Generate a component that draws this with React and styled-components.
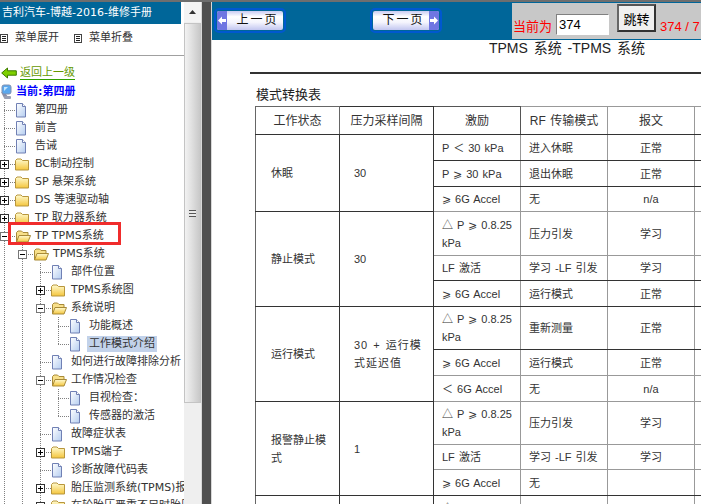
import React from 'react';
import styled, { createGlobalStyle } from 'styled-components';

const GlobalStyle = createGlobalStyle`
  html, body {
    margin: 0;
    height: 100%;
    overflow: hidden;
    background: #fff;
  }
`;

const treeFont = `"DejaVu Sans", "Noto Sans CJK SC", sans-serif`;
const docFont = `"Liberation Sans", "Noto Sans CJK SC", sans-serif`;
const blue = '#006699';
const vDots = 'repeating-linear-gradient(to bottom, #808080 0 1px, transparent 1px 2px)';
const hDots = 'repeating-linear-gradient(to right, #808080 0 1px, transparent 1px 2px)';

const Shell = styled.div`
  display: flex;
  height: 504px;
  box-sizing: border-box;
  border-top: 2px solid #6e6e6e;
  overflow: hidden;
`;

/* left side */
const Side = styled.div`
  position: relative;
  width: 184px;
  flex: none;
  overflow: hidden;
  font: 11px/18px ${treeFont};
  color: #333;
  white-space: nowrap;
`;
const SideTitle = styled.div`
  width: 179px;
  height: 22px;
  padding-left: 2px;
  background: ${blue};
  color: #fff;
  line-height: 22px;
`;
const MenuBar = styled.div`
  display: flex;
  align-items: center;
  height: 32px;
  padding-bottom: 3px;
  box-sizing: border-box;
  border-bottom: 1px solid #a0a0a0;
`;
const MenuItem = styled.span`
  display: flex;
  align-items: center;
  gap: 7px;
  margin-right: 15px;
`;
const BackRow = styled.div`
  display: flex;
  align-items: center;
  gap: 3px;
  height: 18px;
  padding: 8px 0 0 1px;
`;
const BackLink = styled.a`
  color: #669900;
  line-height: 12px;
  border-bottom: 1px solid #33a000;
`;
const CurrentRow = styled.div`
  display: flex;
  align-items: center;
  gap: 4px;
  height: 18px;
  padding-left: 1px;
  margin-top: 1px;
  color: #0000ff;
  font-weight: bold;
`;
const TreeRow = styled.div`
  display: flex;
  align-items: center;
  height: 18.03px;
`;
const Guide = styled.span`
  display: flex;
  align-items: center;
  flex: none;
  width: ${(p) => (p.$junction ? 15 : 18)}px;
  height: 100%;
  background-repeat: no-repeat;
  background-image: ${(p) =>
    p.$junction ? `${vDots}, ${hDots}` : vDots};
  background-position: ${(p) =>
    p.$junction ? '4px 0, 4px 50%' : '4px 0'};
  background-size: ${(p) => {
    const v = p.$last ? '1px 50%' : '1px 100%';
    return p.$junction ? `${v}, 11px 1px` : v;
  }};
`;
const IconSlot = styled.span`
  display: flex;
  align-items: center;
  flex: none;
  width: 18px;
`;
const Label = styled.span`
  margin-left: ${(p) => (p.$active ? 0 : 2)}px;
  padding: 0 ${(p) => (p.$active ? 2 : 0)}px;
  height: 16px;
  line-height: 16px;
  background: ${(p) => (p.$active ? '#c2d2ea' : 'transparent')};
`;
const RedMark = styled.div`
  position: absolute;
  left: 8px;
  top: 220px;
  width: 107px;
  height: 17px;
  border: 3px solid #f02c2c;
  pointer-events: none;
`;

/* scrollbar and splitter */
const Scrollbar = styled.div`
  display: flex;
  flex-direction: column;
  flex: none;
  width: 17px;
  background: #efefef;
`;
const ScrollUp = styled.div`
  display: flex;
  align-items: center;
  justify-content: center;
  height: 20px;
  background: #f4f4f4;
`;
const ScrollThumb = styled.div`
  display: flex;
  align-items: center;
  justify-content: center;
  height: 380px;
  margin-top: 1px;
  border: 1px solid #c4c4c4;
  box-sizing: border-box;
  background: linear-gradient(to right, #f2f2f2, #e2e2e2 40%, #c8c8c8);
`;
const Grip = styled.span`
  width: 7px;
  height: 7px;
  background: repeating-linear-gradient(to bottom, #555 0 1px, #e8e8e8 1px 3px);
`;
const Splitter = styled.div`
  flex: none;
  width: 9px;
  background: #505050;
  border-left: 1px solid #d8d8d8;
  border-right: 1px solid #d8d8d8;
`;

/* right side */
const Main = styled.div`
  flex: 1;
  min-width: 0;
  overflow: hidden;
`;
const TopBar = styled.div`
  display: flex;
  align-items: flex-start;
  height: 38px;
  padding-left: 2px;
  background: ${blue};
`;
const PageButton = styled.div`
  display: flex;
  flex: none;
  flex-direction: ${(p) => (p.$next ? 'row-reverse' : 'row')};
  align-items: stretch;
  width: 66px;
  height: 19px;
  margin: 9px ${(p) => (p.$next ? 0 : 87)}px 0 3px;
  border-radius: 2px;
  outline: 2px solid #0058d0;
  outline-offset: 1px;
  overflow: hidden;
  background: linear-gradient(to bottom, #c8cbf2, #ffffff 30%, #f4f4fd 60%, #c2c6f0);
  font: 12px/19px ${docFont};
  word-spacing: -1.3px;
  color: #111;
`;
const ArrowCap = styled.span`
  display: flex;
  align-items: center;
  justify-content: center;
  flex: none;
  width: 10px;
  background: #6f76e2;
`;
const PageText = styled.span`
  flex: 1;
  padding-left: 3px;
  text-align: center;
`;
const JumpPanel = styled.div`
  display: flex;
  align-items: flex-start;
  flex: none;
  height: 36px;
  margin: 1px 0 0 auto;
  width: 189px;
  padding-left: 1px;
  box-sizing: border-box;
  background: #c8c8c8;
  font-family: ${docFont};
  font-size: 13px;
  color: #ff0000;
  white-space: nowrap;
`;
const JumpLabel = styled.span`
  margin-top: 15px;
  line-height: 18px;
`;
const PageInput = styled.input`
  width: 53px;
  height: 21px;
  margin: 11px 0 0 4px;
  padding: 0 2px;
  box-sizing: border-box;
  border: 1px solid #fff;
  border-top-color: #808080;
  border-left-color: #808080;
  font: 13px ${docFont};
  color: #000;
`;
const JumpButton = styled.button`
  flex: none;
  width: 39px;
  height: 28px;
  margin: 1px 4px 0 8px;
  padding: 0;
  border: 2px solid #333;
  border-top-color: #555;
  border-left-color: #666;
  background: #f0f0f0;
  font: 13px ${docFont};
  color: #000;
`;
const Doc = styled.div`
  width: 634px;
  margin-left: 38px;
  color: #222;
  font-family: ${docFont};
`;
const DocTitle = styled.div`
  height: 16px;
  font-size: 14px;
  line-height: 16px;
  word-spacing: 2px;
  text-align: center;
  white-space: nowrap;
`;
const Rule = styled.div`
  height: 2px;
  margin-top: 16px;
  background: #333;
`;
const SectionTitle = styled.div`
  height: 32px;
  margin-left: 6px;
  font-size: 13px;
  line-height: 41px;
`;
const ModeTable = styled.table`
  table-layout: fixed;
  width: 499px;
  margin-left: 5px;
  border-collapse: collapse;
  font-size: 11px;
  line-height: 18px;
  word-spacing: 1px;
  color: #333;
`;
const HeadCell = styled.th`
  box-sizing: border-box;
  width: ${(p) => p.$w}px;
  height: 28px;
  padding: 0;
  font-size: 12px;
  font-weight: normal;
  border: 1px solid ${(p) => p.$line || '#333'};
  border-bottom-color: #333;
  white-space: nowrap;
`;
const Cell = styled.td`
  padding: 0 0 0 8px;
  border-right: 1px solid #999;
  border-bottom: 1px solid ${(p) => (p.$soft ? '#999' : '#333')};
  white-space: pre-line;
`;
const StateCell = styled(Cell)`
  padding-left: 15px;
  border-left: 1px solid #666;
  border-right-color: #333;
`;
const IntervalCell = styled(Cell)`
  padding-left: 14px;
  border-right-color: #333;
  letter-spacing: ${(p) => (p.$wide ? 1 : 0)}px;
`;
const MsgCell = styled(Cell)`
  padding: 0;
  text-align: center;
`;

const PageIcon = () => (
  <svg width="12" height="15" viewBox="0 0 12 15">
    <defs>
      <linearGradient id="pageFill" x1="0" y1="0" x2="1" y2="1">
        <stop offset="0" stopColor="#ffffff" />
        <stop offset="1" stopColor="#b4cdf0" />
      </linearGradient>
    </defs>
    <path d="M1.5 .5H7.5L10.5 3.5V14H1.5Z" fill="url(#pageFill)" stroke="#7080b4" />
    <path d="M7.5 .5V3.5H10.5" fill="#fff" stroke="#7080b4" />
  </svg>
);

const FolderIcon = ({ open }) => (
  <svg width="16" height="15" viewBox="0 0 16 15">
    <defs>
      <linearGradient id="folderFill" x1="0" y1="0" x2="0" y2="1">
        <stop offset="0" stopColor="#fffbd0" />
        <stop offset="1" stopColor="#f4c53c" />
      </linearGradient>
    </defs>
    {open ? (
      <>
        <path d="M1.5 13V3.5L3 2H6.5L8 3.5H13V6" fill="#f8e08a" stroke="#a88a38" />
        <path d="M1.5 13L4 6.5H15.5L13 13Z" fill="url(#folderFill)" stroke="#a88a38" />
      </>
    ) : (
      <path
        d="M.5 13V3.5L2 2H6L7.5 3.5H13.5V13Z"
        fill="url(#folderFill)"
        stroke="#b8963c"
      />
    )}
  </svg>
);

const Toggle = ({ open }) => (
  <svg width="9" height="9" viewBox="0 0 9 9">
    <rect x=".5" y=".5" width="8" height="8" fill="#fff" stroke={open ? '#777' : '#333'} />
    <path d={open ? 'M2 4.5H7' : 'M2 4.5H7M4.5 2V7'} stroke="#000" />
  </svg>
);

const MenuIcon = () => (
  <svg width="8" height="9" viewBox="0 0 8 9">
    <rect x=".5" y=".5" width="7" height="8" fill="#fff" stroke="#444" />
    <path d="M2 2.5H6M2 4.5H6M2 6.5H6" stroke="#222" />
  </svg>
);

const BackArrow = () => (
  <svg width="16" height="12" viewBox="0 0 16 12">
    <path d="M.7 6L6.5 1V3.8H15.3V8.2H6.5V11Z" fill="#7ed000" stroke="#3d7a00" />
  </svg>
);

const ComputerIcon = () => (
  <svg width="11" height="16" viewBox="0 0 11 16">
    <path d="M0 8L3 14H8L4 9Z" fill="#8a8fa8" />
    <rect x="1" y="1" width="9" height="9" rx="2" fill="#5aa8ee" stroke="#8090b0" />
    <path d="M3 3H7L3 7Z" fill="#c4e6ff" />
    <rect x="3" y="12" width="7" height="3" rx="1" fill="#9aa0b4" />
  </svg>
);

const PageArrow = ({ next }) => (
  <svg width="8" height="9" viewBox="0 0 8 9">
    <path d={next ? 'M8 4.5L4 .5V3H0V6H4V8.5Z' : 'M0 4.5L4 .5V3H8V6H4V8.5Z'} fill="#fff" />
  </svg>
);

const treeRows = [
  { label: '第四册', depth: 0, icon: 'page' },
  { label: '前言', depth: 0, icon: 'page' },
  { label: '告诫', depth: 0, icon: 'page' },
  { label: 'BC制动控制', depth: 0, icon: 'folder', toggle: 'plus' },
  { label: 'SP 悬架系统', depth: 0, icon: 'folder', toggle: 'plus' },
  { label: 'DS 等速驱动轴', depth: 0, icon: 'folder', toggle: 'plus' },
  { label: 'TP 取力器系统', depth: 0, icon: 'folder', toggle: 'plus' },
  { label: 'TP TPMS系统', depth: 0, icon: 'open', toggle: 'minus' },
  { label: 'TPMS系统', depth: 1, icon: 'open', toggle: 'minus' },
  { label: '部件位置', depth: 2, icon: 'page' },
  { label: 'TPMS系统图', depth: 2, icon: 'folder', toggle: 'plus' },
  { label: '系统说明', depth: 2, icon: 'open', toggle: 'minus' },
  { label: '功能概述', depth: 3, icon: 'page' },
  { label: '工作模式介绍', depth: 3, icon: 'page', last: true, active: true },
  { label: '如何进行故障排除分析', depth: 2, icon: 'page' },
  { label: '工作情况检查', depth: 2, icon: 'open', toggle: 'minus' },
  { label: '目视检查：', depth: 3, icon: 'page' },
  { label: '传感器的激活', depth: 3, icon: 'page', last: true },
  { label: '故障症状表', depth: 2, icon: 'page' },
  { label: 'TPMS端子', depth: 2, icon: 'folder', toggle: 'plus' },
  { label: '诊断故障代码表', depth: 2, icon: 'page' },
  { label: '胎压监测系统(TPMS)报警', depth: 2, icon: 'folder', toggle: 'plus' },
  { label: '在轮胎压严重不足时胎压', depth: 2, icon: 'folder', toggle: 'plus' },
];

const modeGroups = [
  {
    state: '休眠',
    interval: '30',
    rows: [
      { h: 26, stim: 'P ＜ 30 kPa', mode: '进入休眠', msg: '正常' },
      { h: 26, stim: 'P ⩾ 30 kPa', mode: '退出休眠', msg: '正常' },
      { h: 25, stim: '⩾ 6G Accel', mode: '无', msg: 'n/a', soft: true },
    ],
  },
  {
    state: '静止模式',
    interval: '30',
    rows: [
      { h: 44, stim: '△ P ⩾ 0.8.25\nkPa', mode: '压力引发', msg: '学习', soft: true },
      { h: 25, stim: 'LF 激活', mode: '学习 -LF 引发', msg: '学习' },
      { h: 26, stim: '⩾ 6G Accel', mode: '运行模式', msg: '正常' },
    ],
  },
  {
    state: '运行模式',
    interval: '30 + 运行模\n式延迟值',
    wide: true,
    rows: [
      { h: 43, stim: '△ P ⩾ 0.8.25\nkPa', mode: '重新测量', msg: '正常' },
      { h: 26, stim: '⩾ 6G Accel', mode: '运行模式', msg: '正常', soft: true },
      { h: 26, stim: '＜ 6G Accel', mode: '无', msg: 'n/a', soft: true },
    ],
  },
  {
    state: '报警静止模\n式',
    interval: '1',
    rows: [
      { h: 43, stim: '△ P ⩾ 0.8.25\nkPa', mode: '压力引发', msg: '学习', soft: true },
      { h: 25, stim: 'LF 激活', mode: '学习 -LF 引发', msg: '学习', soft: true },
      { h: 26, stim: '⩾ 6G Accel', mode: '无', msg: '' },
    ],
  },
  {
    state: '',
    interval: '',
    rows: [{ h: 43, stim: '△ P ⩾ 0.8.25\nkPa', mode: '', msg: '' }],
  },
];

const columns = [
  { title: '工作状态', w: 84, line: '#666' },
  { title: '压力采样间隔', w: 94 },
  { title: '激励', w: 87, line: '#555' },
  { title: 'RF 传输模式', w: 87, line: '#999' },
  { title: '报文', w: 87, line: '#999' },
  { title: '', w: 60, line: '#999' },
];

const TreeLine = ({ row }) => (
  <TreeRow>
    {Array.from({ length: row.depth }, (_, i) => (
      <Guide key={i} />
    ))}
    <Guide $junction $last={row.last}>
      {row.toggle && <Toggle open={row.toggle === 'minus'} />}
    </Guide>
    <IconSlot>
      {row.icon === 'page' ? <PageIcon /> : <FolderIcon open={row.icon === 'open'} />}
    </IconSlot>
    <Label $active={row.active}>{row.label}</Label>
  </TreeRow>
);

const App = () => (
  <>
    <GlobalStyle />
    <Shell>
      <Side>
        <SideTitle>吉利汽车-博越-2016-维修手册</SideTitle>
        <MenuBar>
          <MenuItem>
            <MenuIcon />
            菜单展开
          </MenuItem>
          <MenuItem>
            <MenuIcon />
            菜单折叠
          </MenuItem>
        </MenuBar>
        <BackRow>
          <BackArrow />
          <BackLink>返回上一级</BackLink>
        </BackRow>
        <CurrentRow>
          <ComputerIcon />
          当前:第四册
        </CurrentRow>
        {treeRows.map((row) => (
          <TreeLine key={row.label} row={row} />
        ))}
        <RedMark />
      </Side>
      <Scrollbar>
        <ScrollUp>
          <svg width="7" height="4" viewBox="0 0 7 4">
            <path d="M3.5 0L7 4H0Z" fill="#333" />
          </svg>
        </ScrollUp>
        <ScrollThumb>
          <Grip />
        </ScrollThumb>
      </Scrollbar>
      <Splitter />
      <Main>
        <TopBar>
          <PageButton>
            <ArrowCap>
              <PageArrow />
            </ArrowCap>
            <PageText>上 一 页</PageText>
          </PageButton>
          <PageButton $next>
            <ArrowCap>
              <PageArrow next />
            </ArrowCap>
            <PageText>下 一 页</PageText>
          </PageButton>
          <JumpPanel>
            <JumpLabel>当前为</JumpLabel>
            <PageInput defaultValue="374" />
            <JumpButton>跳转</JumpButton>
            <JumpLabel>374 / 7</JumpLabel>
          </JumpPanel>
        </TopBar>
        <Doc>
          <DocTitle>TPMS 系统 -TPMS 系统</DocTitle>
          <Rule />
          <SectionTitle>模式转换表</SectionTitle>
          <ModeTable>
            <thead>
              <tr>
                {columns.map((col) => (
                  <HeadCell key={col.w + col.title} $w={col.w} $line={col.line}>
                    {col.title}
                  </HeadCell>
                ))}
              </tr>
            </thead>
            <tbody>
              {modeGroups.flatMap((group) =>
                group.rows.map((row, i) => (
                  <tr key={group.state + i} style={{ height: row.h }}>
                    {i === 0 && (
                      <StateCell rowSpan={group.rows.length}>{group.state}</StateCell>
                    )}
                    {i === 0 && (
                      <IntervalCell rowSpan={group.rows.length} $wide={group.wide}>
                        {group.interval}
                      </IntervalCell>
                    )}
                    <Cell $soft={row.soft}>{row.stim}</Cell>
                    <Cell $soft={row.soft}>{row.mode}</Cell>
                    <MsgCell $soft={row.soft}>{row.msg}</MsgCell>
                    <MsgCell $soft={row.soft} />
                  </tr>
                ))
              )}
            </tbody>
          </ModeTable>
        </Doc>
      </Main>
    </Shell>
  </>
);

export default App;
